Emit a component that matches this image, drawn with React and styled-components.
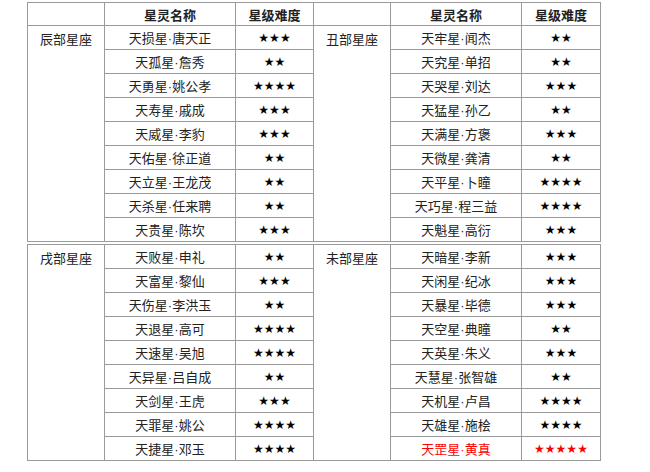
import React from 'react';
import styled, { createGlobalStyle } from 'styled-components';

const GlobalStyle = createGlobalStyle`
  body {
    margin: 0;
    background: #ffffff;
    font-family: "Liberation Sans", "Noto Sans CJK SC", sans-serif;
    color: #222222;
  }
`;

const Page = styled.div`
  padding: 2px 0 0 27px;
`;

const Table = styled.table`
  border-collapse: collapse;
  table-layout: fixed;
  width: 573px;
  font-size: 13px;
`;

const Col = styled.col`
  width: ${props => props.$w}px;
`;

const HeadCell = styled.th`
  border: 1px solid #9a9a9a;
  height: 22px;
  padding: 0;
  font-weight: bold;
  text-align: center;
  vertical-align: middle;
`;

const GroupCell = styled.td`
  border: 1px solid #9a9a9a;
  border-top: ${props => props.$split ? '4px double #9a9a9a' : '1px solid #9a9a9a'};
  padding: 3px 0 0;
  text-align: center;
  vertical-align: top;
`;

const NameCell = styled.td`
  border: 1px solid #9a9a9a;
  border-top: ${props => props.$split ? '4px double #9a9a9a' : '1px solid #9a9a9a'};
  height: 23px;
  padding: 0;
  text-align: center;
  vertical-align: middle;
  color: ${props => props.$red ? '#ff0000' : '#222222'};
`;

const StarCell = styled(NameCell)`
  font-family: "DejaVu Sans", sans-serif;
  font-size: 12px;
  color: ${props => props.$red ? '#ff0000' : '#000000'};
`;

const groups = [
  {
    left: '辰部星座',
    right: '丑部星座',
    rows: [
      ['天损星·唐天正', 3, '天牢星·闻杰', 2],
      ['天孤星·詹秀', 2, '天究星·单招', 2],
      ['天勇星·姚公孝', 4, '天哭星·刘达', 3],
      ['天寿星·戚成', 3, '天猛星·孙乙', 2],
      ['天威星·李豹', 3, '天满星·方褒', 3],
      ['天佑星·徐正道', 2, '天微星·龚清', 2],
      ['天立星·王龙茂', 2, '天平星·卜瞳', 4],
      ['天杀星·任来聘', 2, '天巧星·程三益', 4],
      ['天贵星·陈坎', 3, '天魁星·高衍', 3],
    ],
  },
  {
    left: '戌部星座',
    right: '未部星座',
    rows: [
      ['天败星·申礼', 2, '天暗星·李新', 3],
      ['天富星·黎仙', 3, '天闲星·纪冰', 3],
      ['天伤星·李洪玉', 2, '天暴星·毕德', 3],
      ['天退星·高可', 4, '天空星·典瞳', 2],
      ['天速星·吴旭', 4, '天英星·朱义', 3],
      ['天异星·吕自成', 2, '天慧星·张智雄', 2],
      ['天剑星·王虎', 3, '天机星·卢昌', 4],
      ['天罪星·姚公', 4, '天雄星·施桧', 4],
      ['天捷星·邓玉', 4, '天罡星·黄真', 5],
    ],
  },
];

const stars = n => '★'.repeat(n);

export default function App() {
  return (
    <Page>
      <GlobalStyle />
      <Table>
        <colgroup>
          <Col $w={77} />
          <Col $w={131} />
          <Col $w={78} />
          <Col $w={77} />
          <Col $w={131} />
          <Col $w={79} />
        </colgroup>
        <thead>
          <tr>
            <HeadCell />
            <HeadCell>星灵名称</HeadCell>
            <HeadCell>星级难度</HeadCell>
            <HeadCell />
            <HeadCell>星灵名称</HeadCell>
            <HeadCell>星级难度</HeadCell>
          </tr>
        </thead>
        <tbody>
          {groups.map((g, gi) =>
            g.rows.map((r, i) => {
              const split = gi > 0 && i === 0;
              const red = r[3] === 5;
              return (
                <tr key={`${gi}-${i}`}>
                  {i === 0 && <GroupCell rowSpan={g.rows.length} $split={split}>{g.left}</GroupCell>}
                  <NameCell $split={split}>{r[0]}</NameCell>
                  <StarCell $split={split}>{stars(r[1])}</StarCell>
                  {i === 0 && <GroupCell rowSpan={g.rows.length} $split={split}>{g.right}</GroupCell>}
                  <NameCell $split={split} $red={red}>{r[2]}</NameCell>
                  <StarCell $split={split} $red={red}>{stars(r[3])}</StarCell>
                </tr>
              );
            })
          )}
        </tbody>
      </Table>
    </Page>
  );
}
